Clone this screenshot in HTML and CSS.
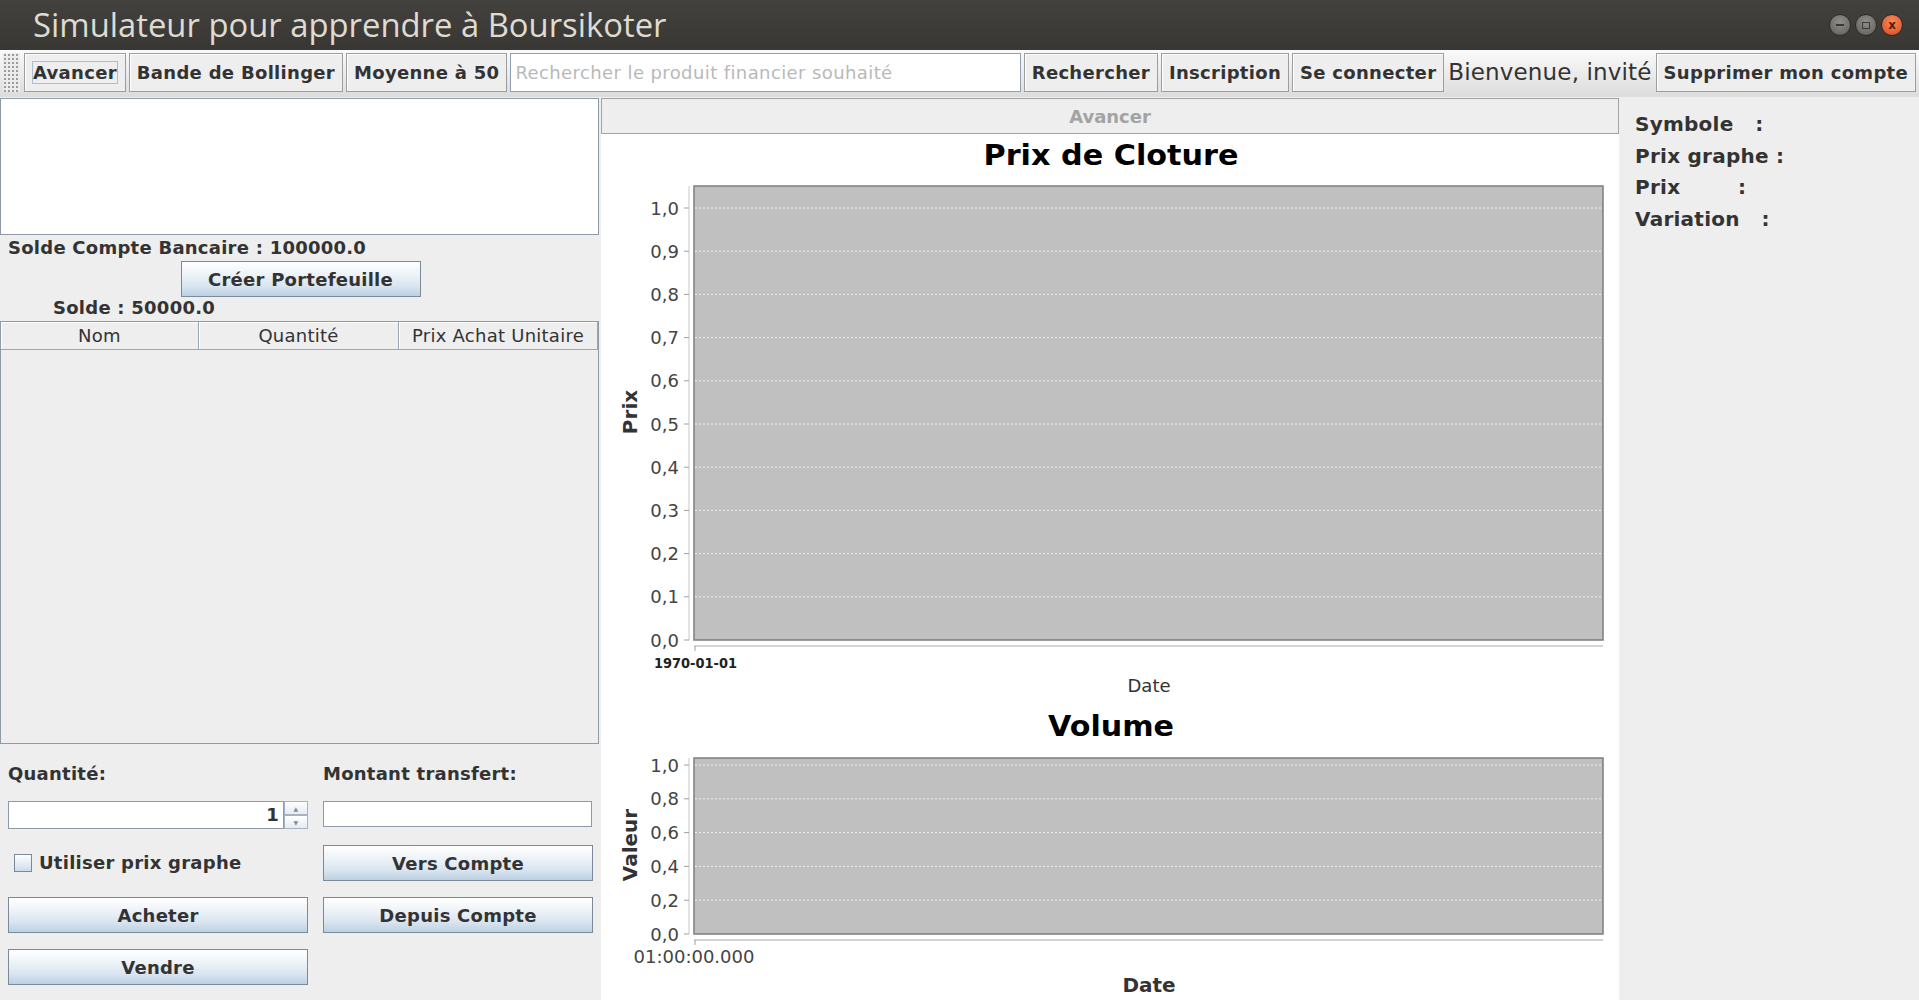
FILE: index.html
```html
<!DOCTYPE html>
<html lang="fr">
<head>
<meta charset="utf-8">
<title>Simulateur pour apprendre à Boursikoter</title>
<link rel="stylesheet" href="styles.css">
</head>
<body>
<header class="titlebar">
  <span class="title">Simulateur pour apprendre à Boursikoter</span>
  <div class="wm-buttons">
    <span class="wm wm-min"><span class="wm-dash"></span></span>
    <span class="wm wm-max"><span class="wm-square"></span></span>
    <span class="wm wm-close">x</span>
  </div>
</header>
<nav class="toolbar">
  <span class="grip"></span>
  <button class="tb-btn"><span class="focus-ring">Avancer</span></button>
  <button class="tb-btn">Bande de Bollinger</button>
  <button class="tb-btn">Moyenne à 50</button>
  <input class="search" type="text" placeholder="Rechercher le produit financier souhaité">
  <button class="tb-btn">Rechercher</button>
  <button class="tb-btn">Inscription</button>
  <button class="tb-btn">Se connecter</button>
  <span class="welcome">Bienvenue, invité</span>
  <button class="tb-btn">Supprimer mon compte</button>
</nav>
<main class="content">
  <section class="left">
    <div class="notes"></div>
    <div class="bold-label bank">Solde Compte Bancaire : 100000.0</div>
    <div class="create-row"><button class="btn create">Créer Portefeuille</button></div>
    <div class="bold-label solde">Solde : 50000.0</div>
    <div class="table">
      <div class="thead">
        <div class="th">Nom</div>
        <div class="th">Quantité</div>
        <div class="th">Prix Achat Unitaire</div>
      </div>
    </div>
    <div class="form">
      <div class="bold-label">Quantité:</div>
      <div class="bold-label">Montant transfert:</div>
      <div class="spinner">
        <div class="spin-field">1</div>
        <div class="spin-arrows"><span>&#9650;</span><span>&#9660;</span></div>
      </div>
      <div class="amount-cell"><div class="amount-field"></div></div>
      <label class="check"><span class="check-box"></span><span class="bold-label">Utiliser prix graphe</span></label>
      <button class="btn">Vers Compte</button>
      <button class="btn">Acheter</button>
      <button class="btn">Depuis Compte</button>
      <button class="btn">Vendre</button>
    </div>
  </section>
  <section class="center">
    <button class="center-btn" disabled>Avancer</button>
    <div class="chart">
      <svg class="chart-svg" width="1018" height="866" viewBox="0 0 1018 866" xmlns="http://www.w3.org/2000/svg">
        <!-- Prix de Cloture -->
        <text class="c-title" x="510" y="31" text-anchor="middle" textLength="255" lengthAdjust="spacingAndGlyphs">Prix de Cloture</text>
        <rect x="93" y="52" width="909" height="454" fill="#c0c0c0" stroke="#7d7d7d" stroke-width="1.5"/>
        <g class="grid">
          <line x1="94" x2="1001" y1="74" y2="74"/>
          <line x1="94" x2="1001" y1="117.2" y2="117.2"/>
          <line x1="94" x2="1001" y1="160.4" y2="160.4"/>
          <line x1="94" x2="1001" y1="203.6" y2="203.6"/>
          <line x1="94" x2="1001" y1="246.8" y2="246.8"/>
          <line x1="94" x2="1001" y1="290" y2="290"/>
          <line x1="94" x2="1001" y1="333.2" y2="333.2"/>
          <line x1="94" x2="1001" y1="376.4" y2="376.4"/>
          <line x1="94" x2="1001" y1="419.6" y2="419.6"/>
          <line x1="94" x2="1001" y1="462.8" y2="462.8"/>
        </g>
        <line class="axis" x1="88" x2="88" y1="52" y2="506"/>
        <g class="ticks">
          <line x1="83" x2="88" y1="74" y2="74"/>
          <line x1="83" x2="88" y1="117.2" y2="117.2"/>
          <line x1="83" x2="88" y1="160.4" y2="160.4"/>
          <line x1="83" x2="88" y1="203.6" y2="203.6"/>
          <line x1="83" x2="88" y1="246.8" y2="246.8"/>
          <line x1="83" x2="88" y1="290" y2="290"/>
          <line x1="83" x2="88" y1="333.2" y2="333.2"/>
          <line x1="83" x2="88" y1="376.4" y2="376.4"/>
          <line x1="83" x2="88" y1="419.6" y2="419.6"/>
          <line x1="83" x2="88" y1="462.8" y2="462.8"/>
          <line x1="83" x2="88" y1="506" y2="506"/>
        </g>
        <g class="tick-label" text-anchor="end">
          <text x="78" y="80.5">1,0</text>
          <text x="78" y="123.7">0,9</text>
          <text x="78" y="166.9">0,8</text>
          <text x="78" y="210.1">0,7</text>
          <text x="78" y="253.3">0,6</text>
          <text x="78" y="296.5">0,5</text>
          <text x="78" y="339.7">0,4</text>
          <text x="78" y="382.9">0,3</text>
          <text x="78" y="426.1">0,2</text>
          <text x="78" y="469.3">0,1</text>
          <text x="78" y="512.5">0,0</text>
        </g>
        <line class="axis-x" x1="93" x2="1002" y1="512" y2="512"/>
        <line class="ticks-x" x1="94" x2="94" y1="512" y2="517"/>
        <text class="date-tick" x="94.5" y="534" text-anchor="middle" textLength="83" lengthAdjust="spacingAndGlyphs">1970-01-01</text>
        <text class="axis-label" x="548" y="558" text-anchor="middle">Date</text>
        <text class="axis-label-bold" transform="translate(36,278) rotate(-90)" text-anchor="middle">Prix</text>

        <!-- Volume -->
        <text class="c-title" x="510" y="602" text-anchor="middle" textLength="126" lengthAdjust="spacingAndGlyphs">Volume</text>
        <rect x="93" y="624" width="909" height="176" fill="#c0c0c0" stroke="#7d7d7d" stroke-width="1.5"/>
        <g class="grid">
          <line x1="94" x2="1001" y1="631" y2="631"/>
          <line x1="94" x2="1001" y1="664.8" y2="664.8"/>
          <line x1="94" x2="1001" y1="698.6" y2="698.6"/>
          <line x1="94" x2="1001" y1="732.4" y2="732.4"/>
          <line x1="94" x2="1001" y1="766.2" y2="766.2"/>
        </g>
        <line class="axis" x1="88" x2="88" y1="624" y2="800"/>
        <g class="ticks">
          <line x1="83" x2="88" y1="631" y2="631"/>
          <line x1="83" x2="88" y1="664.8" y2="664.8"/>
          <line x1="83" x2="88" y1="698.6" y2="698.6"/>
          <line x1="83" x2="88" y1="732.4" y2="732.4"/>
          <line x1="83" x2="88" y1="766.2" y2="766.2"/>
          <line x1="83" x2="88" y1="800" y2="800"/>
        </g>
        <g class="tick-label" text-anchor="end">
          <text x="78" y="637.5">1,0</text>
          <text x="78" y="671.3">0,8</text>
          <text x="78" y="705.1">0,6</text>
          <text x="78" y="738.9">0,4</text>
          <text x="78" y="772.7">0,2</text>
          <text x="78" y="806.5">0,0</text>
        </g>
        <line class="axis-x" x1="93" x2="1002" y1="806" y2="806"/>
        <line class="ticks-x" x1="94" x2="94" y1="806" y2="811"/>
        <text class="tick-label" x="93" y="829" text-anchor="middle">01:00:00.000</text>
        <text class="axis-label-bold" x="548" y="858" text-anchor="middle">Date</text>
        <text class="axis-label-bold" transform="translate(36,711) rotate(-90)" text-anchor="middle">Valeur</text>
      </svg>
    </div>
  </section>
  <aside class="right">
    <div class="info">Symbole   :</div>
    <div class="info">Prix graphe :</div>
    <div class="info">Prix        :</div>
    <div class="info">Variation   :</div>
  </aside>
</main>
</body>
</html>
```
FILE: styles.css
```css
* { box-sizing: border-box; }
html, body { margin: 0; padding: 0; }
body {
  width: 1919px;
  height: 1000px;
  overflow: hidden;
  background: #eeeeee;
  font-family: "DejaVu Sans", sans-serif;
  color: #333333;
  letter-spacing: 0.25px;
}

/* Title bar */
.titlebar {
  height: 50px;
  display: flex;
  align-items: center;
  padding: 0 16px 0 33px;
  background: linear-gradient(#42413d, #383733);
  letter-spacing: 0;
}
.title {
  flex: 1;
  font-family: "Open Sans", sans-serif;
  font-size: 32.8px;
  line-height: 1;
  color: #dfdbd2;
  white-space: nowrap;
}
.wm-buttons { display: flex; gap: 4px; }
.wm {
  width: 22px;
  height: 22px;
  border-radius: 50%;
  display: flex;
  align-items: center;
  justify-content: center;
  border: 1px solid #2b2a27;
}
.wm-min, .wm-max { background: radial-gradient(circle at 50% 35%, #8f8e89, #5e5d59); }
.wm-close {
  background: radial-gradient(circle at 50% 35%, #f88b5c, #d9481b);
  color: #5a1d08;
  font: bold 12px "DejaVu Sans", sans-serif;
  line-height: 1;
}
.wm-dash { width: 8px; height: 2px; background: #3a3936; }
.wm-square { width: 8px; height: 7px; border: 1px solid #3a3936; }

/* Toolbar */
.toolbar {
  height: 47px;
  display: flex;
  align-items: flex-start;
  gap: 3px;
  padding: 3px 3px 0 3px;
  background: linear-gradient(#fafafa, #dcdcdc);
}
.toolbar > * { height: 39px; flex: none; }
.grip {
  width: 17px;
  margin-right: 1px;
  background-color: #ececec;
  background-image: radial-gradient(#9c9c9c 0.9px, transparent 1.1px);
  background-size: 4px 4px;
}
.tb-btn {
  font: bold 18px "DejaVu Sans", sans-serif;
  letter-spacing: 0.3px;
  color: #333333;
  background: #eeeeee;
  border: 1px solid #9d9d9d;
  box-shadow: inset 1px 1px 0 #ffffff;
  padding: 0 7px;
  margin: 0;
  white-space: nowrap;
}
.focus-ring {
  display: inline-block;
  border: 1px solid #a9bfd6;
  line-height: 21px;
  padding: 0;
}
.search {
  flex: 1 1 auto;
  min-width: 0;
  margin: 0;
  border: 1px solid #8ea0b4;
  background: #ffffff;
  font: 18px "DejaVu Sans", sans-serif;
  letter-spacing: 0.4px;
  padding: 0 4px;
  color: #333333;
  outline: none;
}
.search::placeholder { color: #b9b9b9; }
.welcome {
  font-size: 23px;
  letter-spacing: 0.15px;
  line-height: 39px;
  color: #333333;
  padding: 0 1px;
  white-space: nowrap;
}

/* Main layout */
.content { display: flex; height: 903px; }
.left { width: 599px; display: flex; flex-direction: column; }
.center { width: 1018px; margin-left: 2px; display: flex; flex-direction: column; }
.right { flex: 1; padding: 12px 0 0 16px; }

/* Left panel */
.notes {
  height: 137px;
  margin-top: 1px;
  background: #ffffff;
  border: 1px solid #8e9aa8;
}
.bold-label {
  font-weight: bold;
  font-size: 18px;
  line-height: 22px;
  color: #333333;
  white-space: nowrap;
}
.bank { margin-top: 2px; padding-left: 8px; }
.create-row { display: flex; justify-content: center; margin-top: 2px; padding-left: 2px; }
.btn {
  height: 36px;
  margin: 0;
  border: 1px solid #7a8a99;
  background: linear-gradient(#ffffff 0%, #f1f5f9 30%, #dae5f0 70%, #bcd0e4 100%);
  font: bold 18px "DejaVu Sans", sans-serif;
  letter-spacing: 0.25px;
  color: #333333;
  padding: 0;
}
.create { width: 240px; }
.solde { padding-left: 53px; }
.table {
  margin-top: 2px;
  height: 423px;
  border: 1px solid #8e9aa8;
  background: #eeeeee;
}
.thead {
  display: grid;
  grid-template-columns: 198px 200px 1fr;
  height: 28px;
}
.th {
  border-right: 1px solid #9aa7b5;
  border-bottom: 1px solid #9aa7b5;
  box-shadow: inset 1px 1px 0 #ffffff;
  text-align: center;
  font-size: 18px;
  line-height: 27px;
  color: #333333;
  white-space: nowrap;
}
.form {
  display: grid;
  grid-template-columns: 300px 270px;
  grid-template-rows: 22px 28px 36px 36px 36px;
  column-gap: 15px;
  row-gap: 16px;
  padding: 19px 0 0 8px;
}
.spinner { display: flex; }
.spin-field {
  flex: 1;
  background: #ffffff;
  border: 1px solid #8e9aa8;
  text-align: right;
  font-weight: bold;
  font-size: 18px;
  line-height: 26px;
  padding-right: 4px;
  color: #333333;
}
.spin-arrows { width: 24px; display: flex; flex-direction: column; }
.spin-arrows span {
  flex: 1;
  border: 1px solid #a6b2bf;
  background: linear-gradient(#ffffff, #e4ebf2);
  font-size: 6px;
  color: #8a8a8a;
  display: flex;
  align-items: center;
  justify-content: center;
}
.amount-cell { display: flex; align-items: flex-start; }
.amount-field {
  width: 269px;
  height: 26px;
  background: #ffffff;
  border: 1px solid #8e9aa8;
}
.check { display: flex; align-items: center; gap: 7px; padding-left: 6px; }
.check-box {
  width: 18px;
  height: 18px;
  border: 1px solid #7a8a99;
  background: linear-gradient(#ffffff, #cddbe9);
}

/* Center panel */
.center-btn {
  height: 36px;
  margin: 1px 0 0 0;
  border: 1px solid #a3a3a3;
  background: #eeeeee;
  font: bold 18px "DejaVu Sans", sans-serif;
  color: #a3a3a3;
  padding: 0;
}
.chart { flex: 1; background: #ffffff; }
.chart-svg { display: block; font-family: "DejaVu Sans", sans-serif; letter-spacing: 0; }
.c-title { font-size: 28px; font-weight: bold; fill: #000000; }
.grid line { stroke: #ffffff; stroke-opacity: 0.75; stroke-width: 1; stroke-dasharray: 2 2; }
.axis { stroke: #c8c8c8; stroke-width: 1; }
.ticks line { stroke: #a0a0a0; stroke-width: 1; }
.axis-x { stroke: #d4d4d4; stroke-width: 2; }
.ticks-x { stroke: #a0a0a0; stroke-width: 1; }
.tick-label { font-size: 18px; fill: #444444; }
.date-tick { font-size: 14px; font-weight: bold; fill: #222222; }
.axis-label { font-size: 18px; fill: #333333; }
.axis-label-bold { font-size: 20px; font-weight: bold; fill: #333333; }

/* Right panel */
.info {
  font-weight: bold;
  font-size: 20px;
  line-height: 31.5px;
  white-space: pre;
  color: #333333;
}
```
